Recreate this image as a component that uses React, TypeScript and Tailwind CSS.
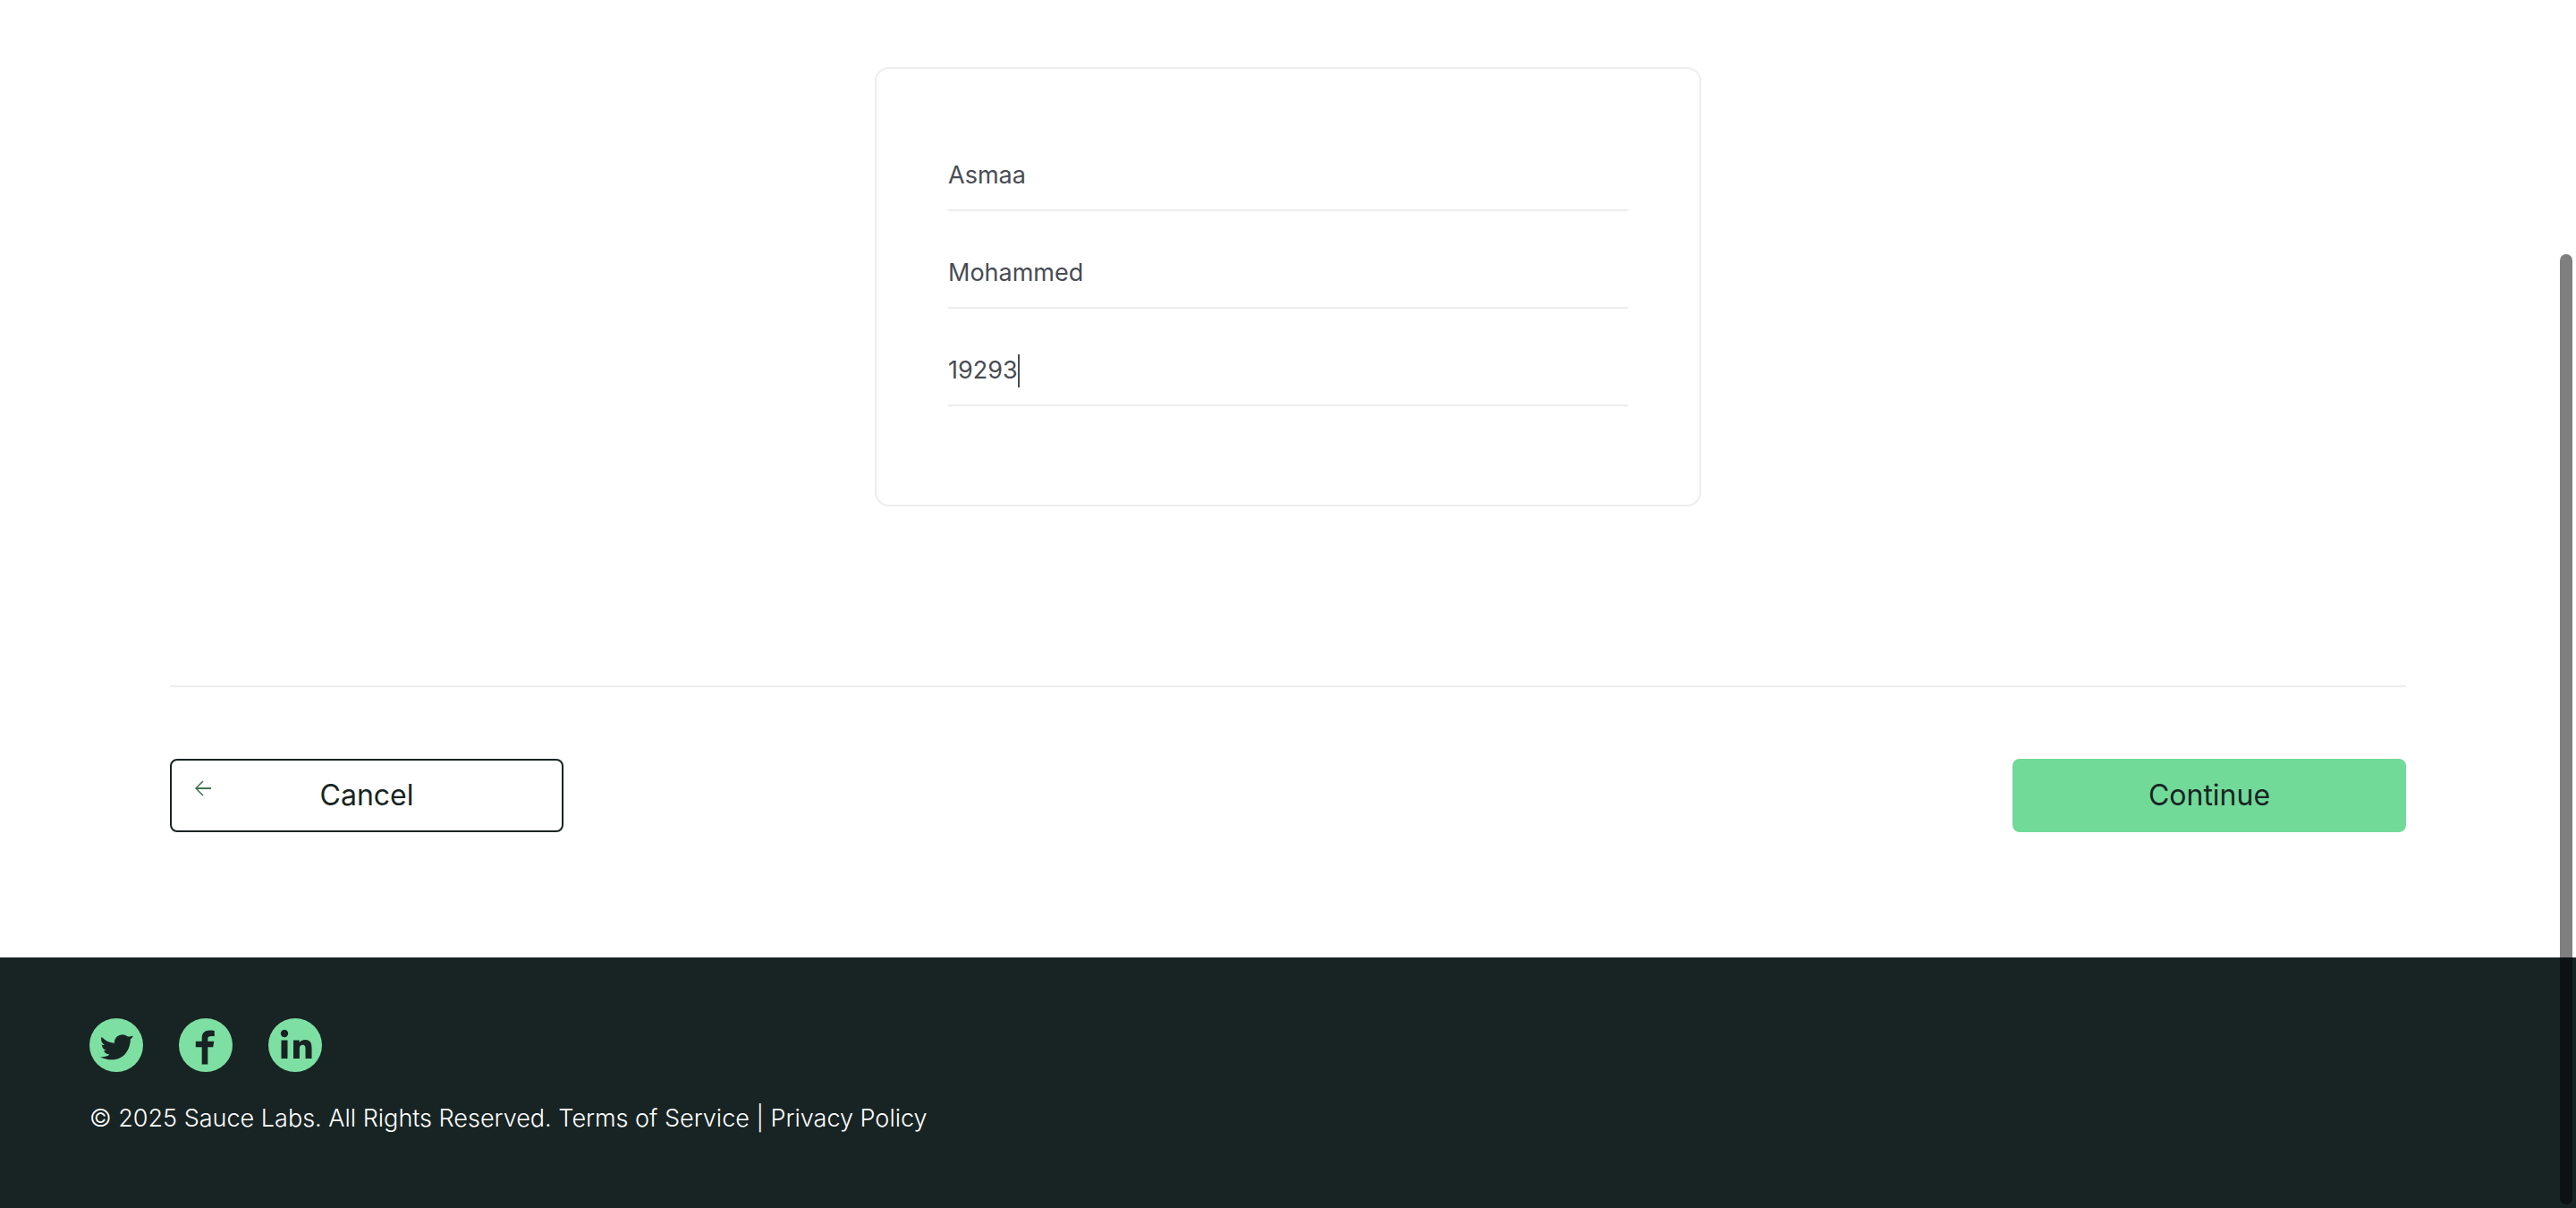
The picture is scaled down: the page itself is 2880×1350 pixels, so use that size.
import React, { useState } from "react";

const fields = [
  { id: "first-name", label: "First Name", value: "Asmaa" },
  { id: "last-name", label: "Last Name", value: "Mohammed" },
  { id: "postal-code", label: "Zip/Postal Code", value: "19293", active: true },
];

function Field({ id, label, value, active }: { id: string; label: string; value: string; active?: boolean }) {
  const [text, setText] = useState(value);
  return (
    <div className="relative">
      <input
        id={id}
        type="text"
        aria-label={label}
        value={text}
        onChange={(e) => setText(e.target.value)}
        className="block h-[79px] w-full border-b-2 border-[#ededed] bg-transparent text-[27px] text-[#484c55] outline-none"
      />
      {active && (
        <div aria-hidden="true" className="pointer-events-none absolute inset-y-5 left-0 flex items-center">
          <span className="invisible text-[27px]">{text}</span>
          <span className="h-[37px] w-0.5 bg-[#484c55]" />
        </div>
      )}
    </div>
  );
}

function Social({ label, children }: { label: string; children: React.ReactNode }) {
  return (
    <li>
      <a href="#" aria-label={label} className="block size-[60px] overflow-hidden rounded-full bg-[#7de0a2]">
        <svg viewBox="0 0 60 60" className="size-full fill-[#182424]">
          {children}
        </svg>
      </a>
    </li>
  );
}

export default function App() {
  return (
    <div className="flex min-h-screen flex-col bg-white font-['Inter','DejaVu_Sans',sans-serif] text-[#182424]">
      <main className="mx-auto w-full max-w-[2500px] flex-1 pt-[75px]">
        <form onSubmit={(e) => e.preventDefault()}>
          <div className="mx-auto flex max-w-[924px] flex-col gap-[30px] rounded-2xl border-2 border-[#ededed] px-20 pt-20 pb-[110px]">
            {fields.map((f) => (
              <Field key={f.id} {...f} />
            ))}
          </div>
          <div className="mt-[200px] flex justify-between border-t-2 border-[#ededed] pt-20 pb-[140px]">
            <button
              type="button"
              className="relative h-[82px] w-[440px] rounded-lg border-2 border-[#182424] bg-white text-[32px]"
            >
              <svg
                viewBox="0 0 20 18"
                className="absolute top-[22px] left-[25px] h-[18px] w-5 fill-none stroke-[#3f7553]"
              >
                <path strokeWidth="2" d="M19 9H2" />
                <path strokeWidth="1.5" d="M10 1L2 9l8 8" />
              </svg>
              Cancel
            </button>
            <button type="submit" className="h-[82px] w-[440px] rounded-lg bg-[#72da99] text-[32px]">
              Continue
            </button>
          </div>
        </form>
      </main>
      <footer className="min-h-[280px] bg-[#182424] px-[100px] pt-[68px] text-white">
        <ul className="flex gap-10">
          <Social label="Twitter">
            <path d="M13.500 20.700c4 4.300 8.500 6.600 14.500 7C27.700 22 32 18.300 37 18.300c2.500 0 4.500 1 6 2.300 2-.2 3.800-.4 5.800-1.200-.6 1.800-1.700 3-2.900 3.900C45.500 36.500 37.500 46.300 25.500 46.300c-5 0-9.500-1-13.500-3.100 4.500.2 8-.6 10.500-2.700-3.400-.2-5.500-1.900-6.500-4.500 1.200.2 2.200.1 3.200-.1-3.500-1-5.300-3.300-5.500-6.700 1 .6 2 .9 3.200.9-3.400-2.600-4.500-5.600-3.400-9.400z" />
          </Social>
          <Social label="Facebook">
            <path d="M25.700 51.500V32.300H18.800v-6.600h6.900v-3.700c0-5.600 3.200-8.500 8.400-8.500 2.500 0 4.500.2 5.700.4V20h-3.600c-3 0-3.900 1.200-3.900 3.200v2.500h7L38.200 32.300h-5.900v19.200z" />
          </Social>
          <Social label="LinkedIn">
            <circle cx="18" cy="17" r="4.200" />
            <path d="M14.500 24.500h7V45h-7zM28 24.500h6.700v2.800c1-1.800 3.300-3.300 6.500-3.300 6.300 0 7.300 4.300 7.300 9.500V45h-7V34.700c0-2.500-.2-5-3.200-5s-3.400 2.500-3.400 5V45H28z" />
          </Social>
        </ul>
        <p className="mt-8 text-[27px] leading-10 font-[330]">
          © 2025 Sauce Labs. All Rights Reserved. Terms of Service | Privacy Policy
        </p>
      </footer>
      <div aria-hidden="true" className="fixed top-[284px] right-1 bottom-1 w-3.5 rounded-full bg-black/50" />
    </div>
  );
}
